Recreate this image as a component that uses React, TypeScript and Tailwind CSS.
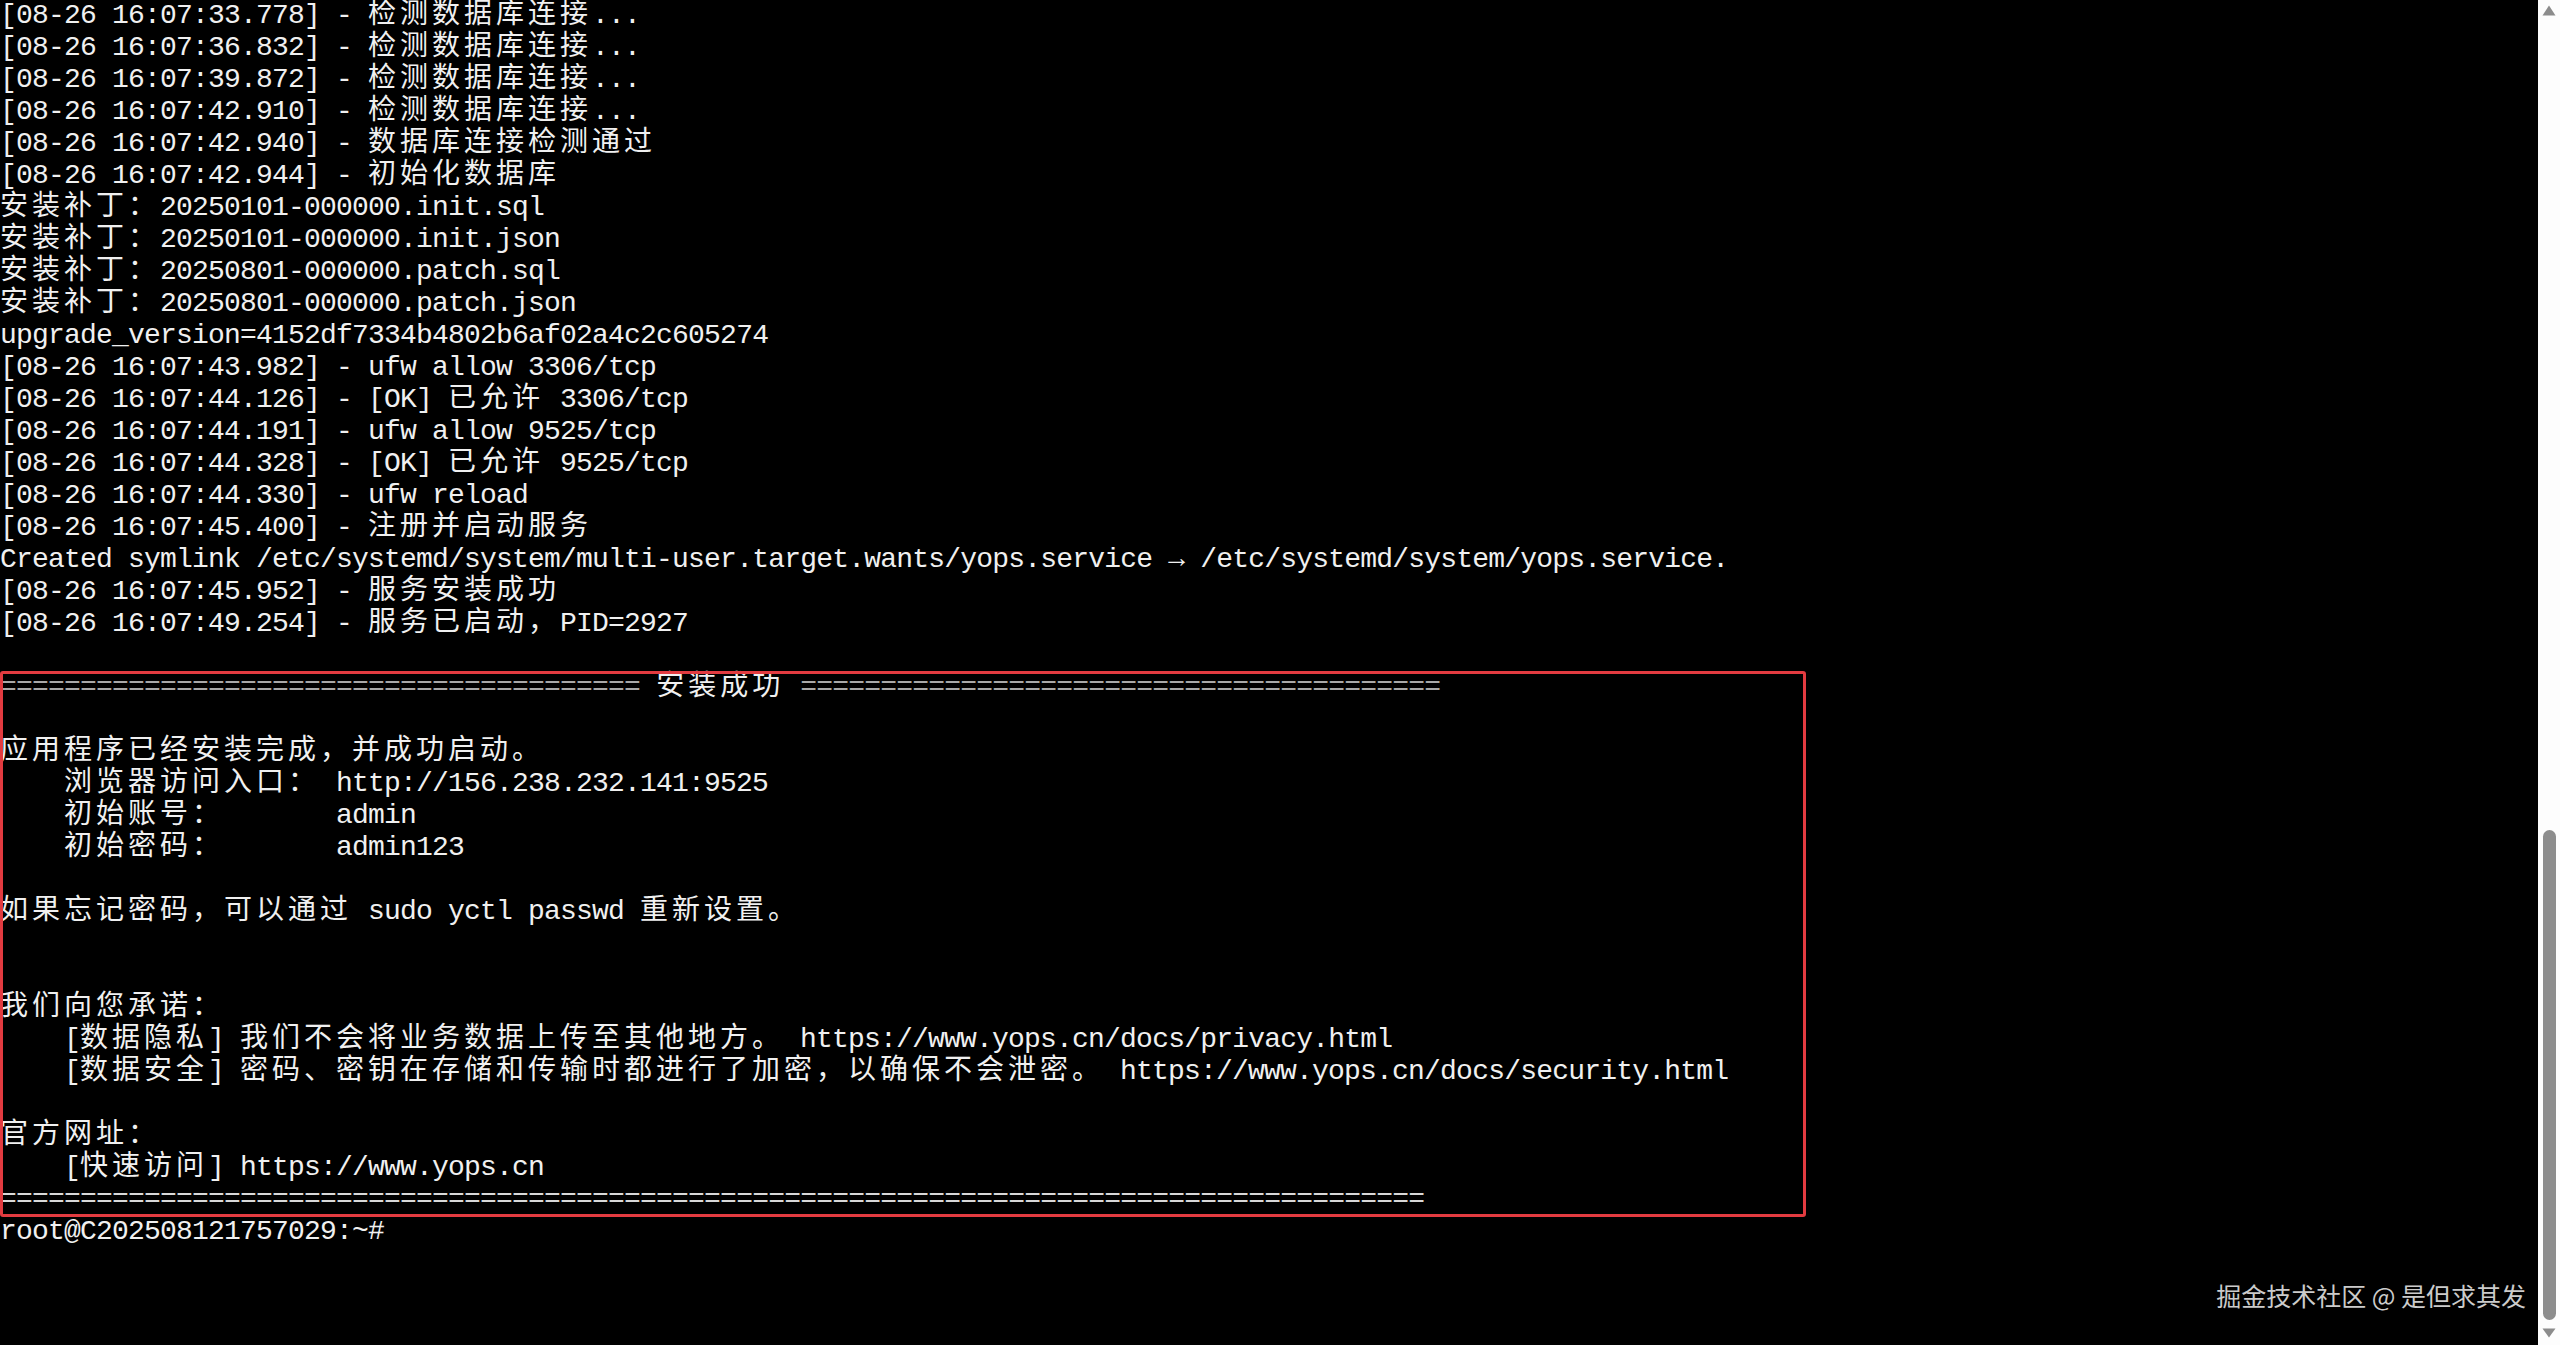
const wide = /[\u2e80-\u9fff\u3000-\u303f\uff00-\uffef]/;

// split a line into half-width / full-width runs so CJK cells come out 2 columns wide
function Cells({ text }: { text: string }) {
  const runs: { w: boolean; s: string }[] = [];
  for (const ch of text) {
    const w = wide.test(ch);
    const last = runs[runs.length - 1];
    if (last && last.w === w) last.s += ch;
    else runs.push({ w, s: ch });
  }
  return (
    <>
      {runs.map((r, i) =>
        r.w ? (
          <span key={i} className="tracking-[4px]">
            {r.s}
          </span>
        ) : (
          <span key={i}>{r.s}</span>
        )
      )}
    </>
  );
}

const logLines = [
  "[08-26 16:07:33.778] - 检测数据库连接...",
  "[08-26 16:07:36.832] - 检测数据库连接...",
  "[08-26 16:07:39.872] - 检测数据库连接...",
  "[08-26 16:07:42.910] - 检测数据库连接...",
  "[08-26 16:07:42.940] - 数据库连接检测通过",
  "[08-26 16:07:42.944] - 初始化数据库",
  "安装补丁：20250101-000000.init.sql",
  "安装补丁：20250101-000000.init.json",
  "安装补丁：20250801-000000.patch.sql",
  "安装补丁：20250801-000000.patch.json",
  "upgrade_version=4152df7334b4802b6af02a4c2c605274",
  "[08-26 16:07:43.982] - ufw allow 3306/tcp",
  "[08-26 16:07:44.126] - [OK] 已允许 3306/tcp",
  "[08-26 16:07:44.191] - ufw allow 9525/tcp",
  "[08-26 16:07:44.328] - [OK] 已允许 9525/tcp",
  "[08-26 16:07:44.330] - ufw reload",
  "[08-26 16:07:45.400] - 注册并启动服务",
  "Created symlink /etc/systemd/system/multi-user.target.wants/yops.service \u2192 /etc/systemd/system/yops.service.",
  "[08-26 16:07:45.952] - 服务安装成功",
  "[08-26 16:07:49.254] - 服务已启动，PID=2927",
  "",
];

const boxLines = [
  "",
  "应用程序已经安装完成，并成功启动。",
  "    浏览器访问入口： http://156.238.232.141:9525",
  "    初始账号：       admin",
  "    初始密码：       admin123",
  "",
  "如果忘记密码，可以通过 sudo yctl passwd 重新设置。",
  "",
  "",
  "我们向您承诺：",
  "    [数据隐私] 我们不会将业务数据上传至其他地方。 https://www.yops.cn/docs/privacy.html",
  "    [数据安全] 密码、密钥在存储和传输时都进行了加密，以确保不会泄密。 https://www.yops.cn/docs/security.html",
  "",
  "官方网址：",
  "    [快速访问] https://www.yops.cn",
];

function Line({ text }: { text: string }) {
  return (
    <div className="h-8 leading-8 whitespace-pre">
      <Cells text={text} />
    </div>
  );
}

export default function App() {
  return (
    <div className="flex h-[1345px] w-[2560px] overflow-hidden bg-black">
      <div className="relative flex-1 overflow-hidden">
        <div className="font-['Liberation_Mono','DejaVu_Sans_Mono','Noto_Sans_CJK_SC',monospace] text-[28px] tracking-[-0.8px] text-[#f0f0f0]">
          {logLines.map((l, i) => (
            <Line key={i} text={l} />
          ))}

          {/* success summary, boxed in red */}
          <div className="relative">
            <div className="h-8 leading-8 whitespace-pre">
              <span className="text-[#a8a8a8]">{"=".repeat(40)}</span>
              <Cells text=" 安装成功 " />
              <span className="text-[#a8a8a8]">{"=".repeat(40)}</span>
            </div>
            {boxLines.map((l, i) => (
              <Line key={i} text={l} />
            ))}
            <div className="h-8 leading-8 whitespace-pre text-[#d8d8d8]">
              {"=".repeat(89)}
            </div>
            <div className="pointer-events-none absolute -top-[1px] -bottom-[1px] left-0 w-[1806px] rounded-[3px] border-[3px] border-[#e23b40]" />
          </div>

          <Line text="root@C202508121757029:~#" />
        </div>

        <div className="absolute right-[12px] bottom-[37px] font-['Noto_Sans_CJK_SC',sans-serif] text-[25px] leading-none text-[#cbcbcb]">
          掘金技术社区 @ 是但求其发
        </div>
      </div>

      {/* scrollbar */}
      <div className="flex w-[22px] flex-col items-center bg-[#fdfdfd]">
        <svg className="mt-[5px]" width="14" height="11" viewBox="0 0 14 11">
          <path d="M7 0.5 L13.5 10.5 L0.5 10.5 Z" fill="#8c8c8c" />
        </svg>
        <div className="flex-1" />
        <div className="h-[490px] w-[13px] rounded-full bg-[#8d8d8d]" />
        <svg className="mt-[8px] mb-[7px]" width="14" height="10" viewBox="0 0 14 10">
          <path d="M0.5 0.5 L13.5 0.5 L7 9.5 Z" fill="#8c8c8c" />
        </svg>
      </div>
    </div>
  );
}
